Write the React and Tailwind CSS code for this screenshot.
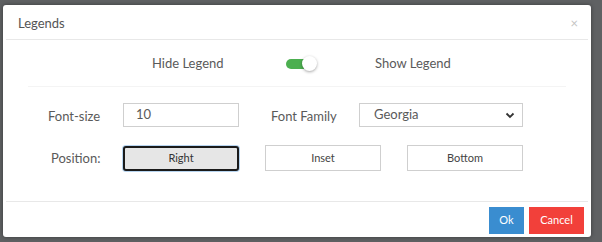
export default function App() {
  return (
    <div
      className="w-[602px] h-[242px] bg-[#5f6163] pt-[5px] pl-[3px] overflow-hidden"
      style={{ fontFamily: 'Lato, "Liberation Sans", sans-serif' }}
    >
      <div className="w-[588px] h-[232px] bg-white rounded-[3px] shadow-[0_0_4px_rgba(0,0,0,0.4)] flex flex-col">
        {/* header */}
        <div className="h-[35px] flex items-center justify-between pt-[3px] pl-[12px] pr-[10px] border-b border-[#e8e8e8] mx-[3px]">
          <span className="text-[13px] text-[#555]">Legends</span>
          <span className="text-[13px] text-[#c4c4c4] leading-none">×</span>
        </div>

        {/* body */}
        <div className="h-[161px] flex flex-col">
          <div className="h-[47px] flex items-center pt-[2px] border-b border-[#f4f4f4] mx-[25px]">
            <span className="ml-[124px] w-[110px] text-[13px] text-[#5a5a5a]">Hide Legend</span>
            <div className="relative w-[32px] h-[16px] ml-[23px]">
              <div className="absolute left-[1px] top-[3px] w-[26px] h-[10px] rounded-full bg-[#4caf50]" />
              <div className="absolute left-[17px] top-0 w-[15px] h-[15px] rounded-full bg-white shadow-[0_1px_3px_rgba(0,0,0,0.35)]" />
            </div>
            <span className="ml-[58px] text-[13px] text-[#5a5a5a]">Show Legend</span>
          </div>

          <div className="flex items-center mt-[16px] h-[24px]">
            <span className="ml-[45px] w-[75px] text-[13px] text-[#5a5a5a] pt-[3px]">Font-size</span>
            <div className="w-[116px] h-[24px] border border-[#cfcfcf] flex items-center pl-[12px] text-[13px] text-[#5a5a5a]">
              10
            </div>
            <span className="ml-[32px] w-[88px] text-[13px] text-[#5a5a5a] pt-[3px]">Font Family</span>
            <div className="w-[164px] h-[24px] border border-[#cfcfcf] flex items-center justify-between pl-[14px] pr-[7px] text-[13px] text-[#5a5a5a]">
              <span>Georgia</span>
              <svg width="10" height="7" viewBox="0 0 10 7">
                <path d="M1.5 1.5 L5 5 L8.5 1.5" fill="none" stroke="#333" strokeWidth="1.8" />
              </svg>
            </div>
          </div>

          <div className="flex items-center mt-[18px] h-[26px]">
            <span className="ml-[48px] w-[72px] text-[13px] text-[#5a5a5a] pt-[2px]">Position:</span>
            <div className="w-[116px] h-[25px] rounded-[3px] border-2 border-[#1a1a1a] bg-[#e6e6e6] shadow-[0_0_0_1px_#b7d4ef] flex items-center justify-center text-[11px] text-[#333]">
              Right
            </div>
            <div className="ml-[26px] w-[116px] h-[26px] border border-[#cfcfcf] flex items-center justify-center text-[11px] text-[#444]">
              Inset
            </div>
            <div className="ml-[26px] w-[116px] h-[26px] border border-[#cfcfcf] flex items-center justify-center text-[11px] text-[#444]">
              Bottom
            </div>
          </div>
        </div>

        {/* footer */}
        <div className="flex-1 border-t border-[#e8e8e8] mx-[3px] flex items-start justify-end pt-[5px] pr-[4px] gap-[5px]">
          <button className="w-[35px] h-[27px] bg-[#3a8dd0] text-white text-[11px]">Ok</button>
          <button className="w-[55px] h-[27px] bg-[#f2403a] text-white text-[11px]">Cancel</button>
        </div>
      </div>
    </div>
  );
}
